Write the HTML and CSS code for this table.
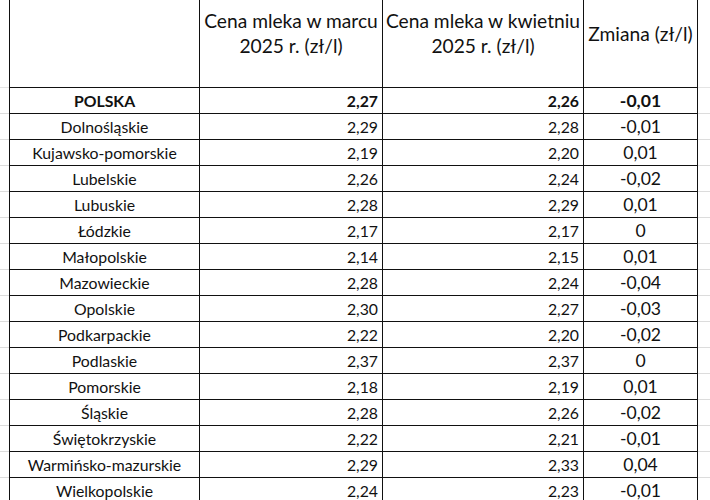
FILE: index.html
```html
<!DOCTYPE html>
<html lang="pl">
<head>
<meta charset="utf-8">
<title>Cena mleka</title>
<link rel="stylesheet" href="styles.css">
</head>
<body>
<div class="sheet">
  <div class="edge edge-left head-edge"></div>
  <div class="cell head first"></div>
  <div class="cell head"><span>Cena mleka w marcu<br>2025 r. (zł/l)</span></div>
  <div class="cell head"><span>Cena mleka w kwietniu<br>2025 r. (zł/l)</span></div>
  <div class="cell head"><span>Zmiana (zł/l)</span></div>
  <div class="edge edge-right head-edge"></div>

  <div class="edge edge-left"></div>
  <div class="cell first name bold">POLSKA</div>
  <div class="cell num bold">2,27</div>
  <div class="cell num bold">2,26</div>
  <div class="cell chg bold">-0,01</div>
  <div class="edge edge-right"></div>

  <div class="edge edge-left"></div>
  <div class="cell first name">Dolnośląskie</div>
  <div class="cell num">2,29</div>
  <div class="cell num">2,28</div>
  <div class="cell chg">-0,01</div>
  <div class="edge edge-right"></div>

  <div class="edge edge-left"></div>
  <div class="cell first name">Kujawsko-pomorskie</div>
  <div class="cell num">2,19</div>
  <div class="cell num">2,20</div>
  <div class="cell chg">0,01</div>
  <div class="edge edge-right"></div>

  <div class="edge edge-left"></div>
  <div class="cell first name">Lubelskie</div>
  <div class="cell num">2,26</div>
  <div class="cell num">2,24</div>
  <div class="cell chg">-0,02</div>
  <div class="edge edge-right"></div>

  <div class="edge edge-left"></div>
  <div class="cell first name">Lubuskie</div>
  <div class="cell num">2,28</div>
  <div class="cell num">2,29</div>
  <div class="cell chg">0,01</div>
  <div class="edge edge-right"></div>

  <div class="edge edge-left"></div>
  <div class="cell first name">Łódzkie</div>
  <div class="cell num">2,17</div>
  <div class="cell num">2,17</div>
  <div class="cell chg">0</div>
  <div class="edge edge-right"></div>

  <div class="edge edge-left"></div>
  <div class="cell first name">Małopolskie</div>
  <div class="cell num">2,14</div>
  <div class="cell num">2,15</div>
  <div class="cell chg">0,01</div>
  <div class="edge edge-right"></div>

  <div class="edge edge-left"></div>
  <div class="cell first name">Mazowieckie</div>
  <div class="cell num">2,28</div>
  <div class="cell num">2,24</div>
  <div class="cell chg">-0,04</div>
  <div class="edge edge-right"></div>

  <div class="edge edge-left"></div>
  <div class="cell first name">Opolskie</div>
  <div class="cell num">2,30</div>
  <div class="cell num">2,27</div>
  <div class="cell chg">-0,03</div>
  <div class="edge edge-right"></div>

  <div class="edge edge-left"></div>
  <div class="cell first name">Podkarpackie</div>
  <div class="cell num">2,22</div>
  <div class="cell num">2,20</div>
  <div class="cell chg">-0,02</div>
  <div class="edge edge-right"></div>

  <div class="edge edge-left"></div>
  <div class="cell first name">Podlaskie</div>
  <div class="cell num">2,37</div>
  <div class="cell num">2,37</div>
  <div class="cell chg">0</div>
  <div class="edge edge-right"></div>

  <div class="edge edge-left"></div>
  <div class="cell first name">Pomorskie</div>
  <div class="cell num">2,18</div>
  <div class="cell num">2,19</div>
  <div class="cell chg">0,01</div>
  <div class="edge edge-right"></div>

  <div class="edge edge-left"></div>
  <div class="cell first name">Śląskie</div>
  <div class="cell num">2,28</div>
  <div class="cell num">2,26</div>
  <div class="cell chg">-0,02</div>
  <div class="edge edge-right"></div>

  <div class="edge edge-left"></div>
  <div class="cell first name">Świętokrzyskie</div>
  <div class="cell num">2,22</div>
  <div class="cell num">2,21</div>
  <div class="cell chg">-0,01</div>
  <div class="edge edge-right"></div>

  <div class="edge edge-left"></div>
  <div class="cell first name">Warmińsko-mazurskie</div>
  <div class="cell num">2,29</div>
  <div class="cell num">2,33</div>
  <div class="cell chg">0,04</div>
  <div class="edge edge-right"></div>

  <div class="edge edge-left"></div>
  <div class="cell first name">Wielkopolskie</div>
  <div class="cell num">2,24</div>
  <div class="cell num">2,23</div>
  <div class="cell chg">-0,01</div>
  <div class="edge edge-right"></div>
</div>
</body>
</html>
```

FILE: styles.css
```css
html, body {
  margin: 0;
  padding: 0;
  background: #ffffff;
}

body {
  width: 710px;
  height: 500px;
  overflow: hidden;
  font-family: "Lato", "Liberation Sans", sans-serif;
  color: #111111;
}

.sheet {
  display: grid;
  grid-template-columns: 9px 191px 183px 201px 114px 1fr;
  grid-template-rows: 88px;
  grid-auto-rows: 26px;
}

.cell {
  box-sizing: border-box;
  border-right: 1px solid #111111;
  border-bottom: 1px solid #111111;
  display: flex;
  align-items: center;
  font-size: 15.8px;
  white-space: nowrap;
}

.cell.first {
  border-left: 1px solid #111111;
}

.edge {
  box-sizing: border-box;
  border-bottom: 1px solid #dcdcdc;
}

.head-edge {
  border-bottom-color: #e4e4e4;
}

.head {
  justify-content: center;
  text-align: center;
  font-size: 19.2px;
  line-height: 25px;
  padding-bottom: 21px;
}

.name {
  justify-content: center;
}

.num {
  justify-content: flex-end;
  padding-right: 4px;
}

.chg {
  justify-content: center;
  font-size: 17.6px;
}

.bold {
  font-weight: 700;
}
```
